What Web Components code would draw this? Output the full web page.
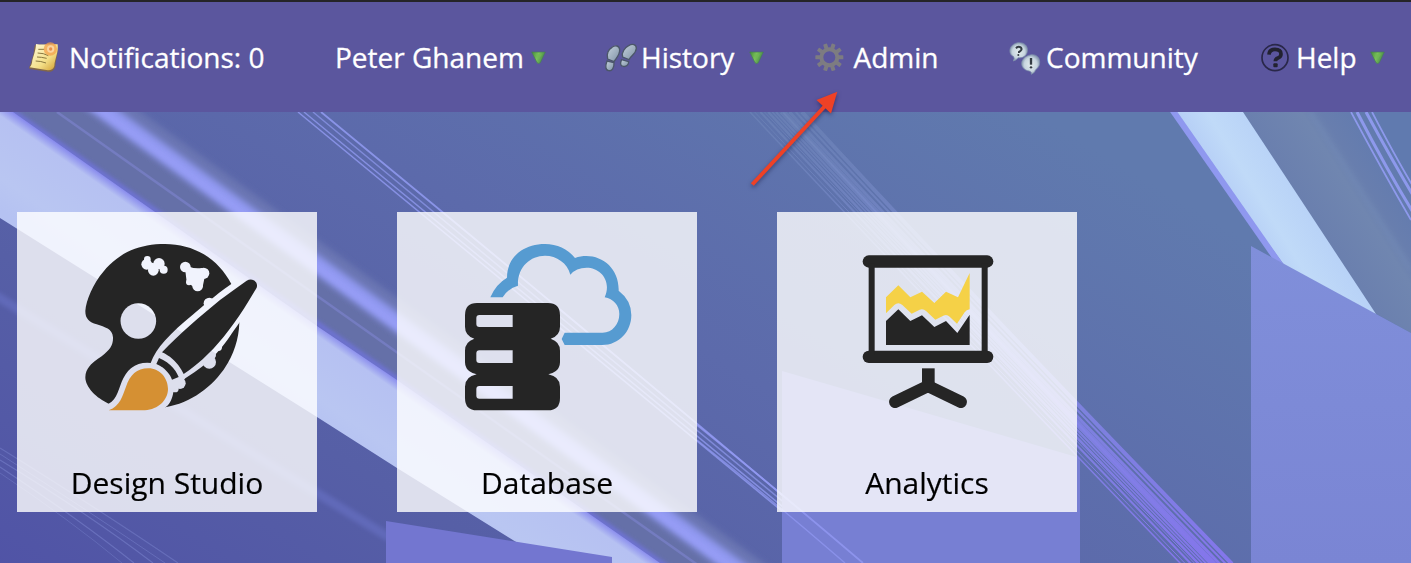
<!DOCTYPE html>
<html lang="en">
<head>
<meta charset="utf-8">
<title>Home</title>
<style>
html,body{margin:0;height:100%;overflow:hidden}
body{font-family:"Open Sans","Noto Sans",sans-serif}
</style>
</head>
<body>
<app-home></app-home>
<script>
const define = (name, html) => customElements.define(name, class extends HTMLElement {
  constructor() {
    super();
    const t = document.createElement('template');
    t.innerHTML = html;
    this.attachShadow({mode: 'open'}).appendChild(t.content.cloneNode(true));
  }
});

// Small and large icons, drawn on a grid of three units per pixel.
const gearTeeth = Array.from({length: 10}, (_, i) => `<rect x="-6" y="-42" width="12" height="18" rx="2" transform="rotate(${i * 36 + 18})"/>`).join('');
const ICONS = {
  note: [32, 34, `<defs><linearGradient id="n" x2="1" y2="1"><stop offset="0" stop-color="#fffbe0"/><stop offset=".6" stop-color="#f4df88"/><stop offset="1" stop-color="#cf9a2c"/></linearGradient></defs>
    <g transform="translate(-3 3)"><path d="M21 12 C45 8 65 13 86 10 C94 32 84 49 82 75 C81 86 73 94 60 92 L5 84 C2 75 7 74 9 65 C13 48 18 40 18 24Z" fill="#8c6b34" opacity=".8"/>
    <path d="M24 9 C45 13 65 8 89 10 C92 35 80 54 79 75 Q75 88 60 88 L5 79 C10 75 12 67 13 58 C17 42 23 30 24 9Z" fill="url(#n)"/>
    <path d="M31 25h18M29 36q18 0 32 8M27 48q12 0 29 4M23 60q15 0 31 6" fill="none" stroke="#8a7840" stroke-width="3"/>
    <circle cx="67" cy="24" r="20" fill="#f3a04b" opacity=".75"/><circle cx="68" cy="24" r="11" fill="#fbd4a0"/><circle cx="68" cy="24" r="5" fill="#e8904a"/></g>`],
  feet: [32, 30, `<defs><linearGradient id="f" x2="1" y2="1"><stop offset="0" stop-color="#c4d1dc"/><stop offset="1" stop-color="#7f92a6"/></linearGradient></defs>
    <g transform="translate(0 5)" fill="url(#f)" stroke="#4b5669" stroke-width="4"><path d="M21 11 C31 3 43 6 44 18 C45 34 34 42 27 54 L8 46 C3 31 11 17 21 11Z"/><path d="M6 52 L27 57 C28 72 21 83 11 81 C0 79 1 66 6 52Z"/>
    <path d="M71 6 C82 -1 94 2 94 14 C93 32 78 35 72 48 L53 40 C48 25 61 11 71 6Z"/><path d="M50 48 L71 54 C71 64 63 70 55 68 C45 67 45 58 50 48Z"/></g>`],
  gear: [30, 30, `<g transform="translate(43 46)" fill="#7d7c81">${gearTeeth}<circle r="24" fill="none" stroke="#7d7c81" stroke-width="12"/></g>`],
  chat: [32, 33, `<defs><radialGradient id="c"><stop offset="0" stop-color="#e3eced"/><stop offset=".7" stop-color="#c7d5df"/><stop offset="1" stop-color="#8d9fb4"/></radialGradient></defs>
    <g transform="translate(-1 3)"><g fill="url(#c)" stroke="#8295ad" stroke-width="2"><path d="M28 2 C48 1 58 12 56 28 C54 43 41 49 28 47 Q23 55 14 57 Q19 48 14 43 C-2 37 -1 7 28 2Z"/><path d="M68 38 C85 37 94 48 93 63 C93 72 86 80 80 84 Q80 91 68 97 Q70 89 62 87 C45 85 36 72 40 58 Q46 42 68 38Z"/></g>
    <path d="M22 19 q7-8 15-2 q5 7-6 13 v3" fill="none" stroke="#333b43" stroke-width="6"/><circle cx="29" cy="39" r="3" fill="#333b43"/><path d="M67 48v20" stroke="#333b43" stroke-width="7"/><circle cx="67" cy="76" r="3.6" fill="#333b43"/></g>`],
  help: [30, 30, `<g transform="translate(-1 4)"><circle cx="43" cy="43" r="39" fill="none" stroke="#292749" stroke-width="5"/><path d="M25 34 Q26 18 43 18 Q61 18 61 32 Q61 41 52 44 Q44 47 44 54" fill="none" stroke="#222230" stroke-width="11"/><rect x="38" y="60" width="13" height="12" rx="3" fill="#222230"/></g>`],
  caret: [15, 13, `<defs><linearGradient id="a" x2="1" y2=".3"><stop stop-color="#438b38"/><stop offset=".5" stop-color="#79c05a"/><stop offset="1" stop-color="#478a49"/></linearGradient></defs><path d="M2 3 H43 L28 35 Q23 40 18 35Z" fill="url(#a)" stroke="#477a58" stroke-width="2"/><path d="M13 10 H33 L23 26Z" fill="#71b654" opacity=".7"/>`],
  palette: [220, 210, `<defs><mask id="m" maskUnits="userSpaceOnUse" x="0" y="0" width="660" height="630"><rect width="660" height="630" fill="#fff"/>
    <circle cx="235" cy="303" r="53.5"/>
    <circle cx="262" cy="118" r="10"/><circle cx="260" cy="133" r="16"/><circle cx="275" cy="140" r="12"/><circle cx="297" cy="131" r="17"/><circle cx="280" cy="151" r="16"/><circle cx="311" cy="149" r="12"/>
    <circle cx="376" cy="141" r="16"/><circle cx="431" cy="160" r="17"/><circle cx="413" cy="198" r="16"/><circle cx="387" cy="187" r="9"/><path d="M376 152 L388 140 Q404 147 426 144 L434 172 L428 200 H400 L380 185Z"/>
    <circle cx="448" cy="250" r="17"/><circle cx="448" cy="426" r="20"/><circle cx="455" cy="405" r="13"/><circle cx="475" cy="382" r="11"/><circle cx="360" cy="490" r="17"/><circle cx="345" cy="506" r="11"/>
    <path d="M120 590 L146 551 C172 540 177 500 190 475 C205 444 230 428 262 428 L272 429 C288 385 330 340 400 283 C430 257 460 230 514 192 L620 130 L610 230 L538 308 C515 340 500 365 480 388 C450 425 415 450 376 475 L340 515 C338 535 329 553 316 562 L300 620Z"/></mask></defs>
    <path mask="url(#m)" fill="#252525" d="M146 551 C110 535 76 502 76 472 C76 440 103 425 125 409 C150 390 160 375 159 352 C157 326 135 322 110 313 C88 306 76 297 76 273 C78 240 100 190 130 155 C180 95 240 72 315 72 C400 72 475 115 514 192 C530 225 540 260 538 308 C535 430 440 540 316 562Z"/>
    <path fill="#252525" d="M306 397 C360 340 420 290 480 240 Q515 214 560 182 C577 172 596 186 590 203 L580 220 C545 280 500 345 460 386 C430 417 400 443 371 462 C355 430 335 410 306 397Z"/>
    <path fill="#252525" d="M297 414 C325 425 345 445 356 471 L336 479 C330 460 310 440 289 432Z"/>
    <path fill="#d59033" d="M146 571 C182 556 186 530 198 500 C210 465 230 445 265 445 C300 445 324 475 324 507 C324 540 295 568 255 571Z"/>`],
  database: [220, 210, `<path fill="#569bd1" d="M151 232 Q167 193 201 173 C201 112 249 72 315 72 Q370 72 405 114 C470 92 538 136 536 212 Q574 241 574 285 C574 334 538 375 486 375 H374 L365 357 L374 338 H488 C517 338 538 312 538 282 C538 257 520 236 494 232 C516 182 481 143 440 143 Q408 143 391 164 C382 129 350 107 315 107 C270 107 231 143 234 197 Q207 203 188 232Z"/>
    <path fill="#252525" fill-rule="evenodd" d="M111 249 H324 Q360 249 360 286 V320 Q360 347 332 356 Q360 365 360 392 V427 Q360 455 325 463 Q360 470 360 500 V534 Q360 571 324 571 H111 Q75 571 75 534 V500 Q75 470 110 463 Q75 455 75 427 V392 Q75 365 103 356 Q75 347 75 320 V286 Q75 249 111 249Z M118 285 Q109 285 109 294V312Q109 321 118 321H218V285Z M118 391 Q109 391 109 400V420Q109 429 118 429H218V391Z M118 498 Q109 498 109 507V527Q109 536 118 536H218V498Z"/>`],
  chart: [220, 210, `<g transform="translate(60 30)" fill="#252525"><rect x="68" y="76" width="392" height="37" rx="18.5"/><rect x="68" y="362" width="392" height="37" rx="18.5"/><path d="M86 100h18v275H86zM425 100h18v275h-18z"/>
    <path d="M138 273 L175 238 L211 273 L246 256 L283 291 L318 273 L352 309 L389 254 V345 H138Z"/>
    <path fill="#f5d147" d="M138 202 L175 166 L211 202 L246 185 L283 219 L318 185 L354 202 L389 129 V238 Q379 239 374 247 L351 281 L329 260 Q320 252 310 257 L286 269 L259 244 Q250 235 239 239 L215 251 L187 225 Q175 214 163 225 L138 250Z"/>
    <path d="M246 415h38v50h-38z"/><path d="M165 516 L264 468 L363 516" fill="none" stroke="#252525" stroke-width="36" stroke-linecap="round" stroke-linejoin="miter"/></g>`]
};
customElements.define('ui-icon', class extends HTMLElement {
  constructor() { super(); this.attachShadow({mode: 'open'}); }
  connectedCallback() {
    const [w, h, body] = ICONS[this.getAttribute('name')];
    this.shadowRoot.innerHTML = `<style>:host{display:block;flex:none;width:${w}px;height:${h}px}svg{display:block;overflow:visible}</style><svg width="${w}" height="${h}" viewBox="0 0 ${w * 3} ${h * 3}">${body}</svg>`;
  }
});

define('nav-item', `<style>
:host{display:flex;align-items:center;white-space:nowrap;color:#fff;font-size:28px;line-height:40px;height:40px}
.lead{width:var(--lead,0px);flex:none}
.label{width:var(--label);flex:none;-webkit-text-stroke:.3px #fff}
</style><div class="lead"><slot name="icon"></slot></div><span class="label"><slot></slot></span><slot name="caret"></slot>`);

define('top-bar', `<style>
:host{display:grid;box-sizing:border-box;height:112px;border-top:2px solid #252428;background:#5b569e;padding:0 0 0 29px;grid-template-columns:306px 270px 210px 194px 252px 1fr;align-items:center}
</style><slot></slot>`);

define('home-card', `<style>
:host{display:flex;flex-direction:column;box-sizing:border-box;width:300px;height:300px;padding-top:8px;background:rgba(255,255,255,.8);color:#000}
::slotted(ui-icon){margin-left:43px}
.label{font-size:30px;line-height:40px;margin-top:33px;text-align:center;-webkit-text-stroke:.2px #000}
</style><slot name="icon"></slot><div class="label"><slot></slot></div>`);

// Light rays: each one is a start point, a control point, an end point, a width and an opacity.
const rays = (list, color) => list.map(([x1, y1, cx, cy, x2, y2, w, o]) =>
  `<path d="M${x1} ${y1} Q${cx} ${cy} ${x2} ${y2}" fill="none" stroke="${color}" stroke-width="${w}" opacity="${o}"/>`).join('');
const fan = [0, .09, .2, .28, .35, .43, .5, .6, .66, .76, .88, 1].map((t, i) =>
  [750 + 52 * t, 112, 933 + 28 * t, 307 - 22 * t, 1181 + 51 * t, 564, [1.5, 1, 2, 1, 2.5, 1.5, 2, 4, 4, 3, 2, 4][i], 1]);

define('light-backdrop', `<style>:host{display:block;grid-area:1/1}svg{display:block}</style>
<svg width="1411" height="451" viewBox="0 112 1411 451" preserveAspectRatio="none">
<defs>
<linearGradient id="bg" gradientUnits="userSpaceOnUse" x1="300" y1="760" x2="780" y2="-40"><stop offset="0" stop-color="#5053a6"/><stop offset=".3" stop-color="#565fa6"/><stop offset=".6" stop-color="#5c6aab"/><stop offset="1" stop-color="#607aae"/></linearGradient>
<linearGradient id="white" gradientUnits="userSpaceOnUse" x1="106" y1="283" x2="156" y2="211"><stop offset="0" stop-color="#b5c2f2"/><stop offset=".3" stop-color="#b9c6f2"/><stop offset=".88" stop-color="#b6c1f2"/><stop offset="1" stop-color="#8587ed"/></linearGradient>
<linearGradient id="r" gradientUnits="userSpaceOnUse" x1="1224" y1="190" x2="1288" y2="151"><stop offset="0" stop-color="#b6cff6"/><stop offset=".35" stop-color="#c0daf8"/><stop offset=".86" stop-color="#b8d2f7"/><stop offset="1" stop-color="#8388e7"/></linearGradient>
<linearGradient id="rg" gradientUnits="userSpaceOnUse" x1="1298" y1="198" x2="1390" y2="140"><stop offset="0" stop-color="#6a7fae"/><stop offset=".45" stop-color="#7086b0"/><stop offset=".6" stop-color="#687eae"/><stop offset="1" stop-color="#607aaf"/></linearGradient>
<linearGradient id="ray" gradientUnits="userSpaceOnUse" x1="0" y1="112" x2="0" y2="563"><stop offset="0" stop-color="#7a91c0" stop-opacity=".35"/><stop offset=".5" stop-color="#818be2" stop-opacity=".8"/><stop offset="1" stop-color="#8476eb"/></linearGradient>
<linearGradient id="box" x2="0" y2="1"><stop offset="0" stop-color="#808fda"/><stop offset="1" stop-color="#7a85d4"/></linearGradient>
<filter id="glow" x="-5%" y="-5%" width="110%" height="110%"><feGaussianBlur stdDeviation="3"/></filter>
<filter id="soft" x="-5%" y="-5%" width="110%" height="110%"><feGaussianBlur stdDeviation="2"/></filter>
<filter id="fine" x="-5%" y="-5%" width="110%" height="110%"><feGaussianBlur stdDeviation=".6"/></filter>
</defs>
<rect y="112" width="1411" height="451" fill="url(#bg)"/>
<path d="M-16 92 H105 L778 580 H684Z" fill="#6570a8" filter="url(#glow)"/>
<path d="M89 92 L778 591" stroke="#6a76b3" stroke-width="28" filter="url(#glow)"/>
<path d="M84 96 L764 588" stroke="#9199f1" stroke-width="17" filter="url(#glow)"/>
<path d="M81 96 L760 588" stroke="#999ff8" stroke-width="6" opacity=".7" filter="url(#soft)"/>
<path d="M57 112 L702 568" stroke="#7e84d0" stroke-width="2.5" opacity=".6" filter="url(#fine)"/>
<path d="M-4 100 L674 572" stroke="#7174d9" stroke-width="5" filter="url(#soft)"/>
<path d="M-10 98 L-10 212 L0 218 L317 417 L397 468 L550 563 H660 L397 380 L317 326 L13 112Z" fill="url(#white)" filter="url(#fine)"/>
<path d="M-10 292 L390 538" stroke="#7079d0" stroke-width="9" opacity=".45" filter="url(#soft)"/>
<g filter="url(#fine)">${rays([[0,467,80,520,134,563,1.2,.4],[0,473,70,520,122,563,1,.3],[0,460,90,515,153,563,1.2,.4],[0,454,90,512,165,563,1,.35],[0,448,100,510,178,563,1.2,.35]], '#8994dc')}
${rays([[298,112,570,337,845,563,1.6,.85],[304,112,575,337,851,563,1.5,.8],[313,112,583,335,857,563,1.5,.7],[321,112,590,333,863,563,1.8,.9]], '#8e98ed')}</g>
<path d="M386 521 L612 557 V563 H386Z" fill="#7376d0"/>
<path d="M782 371 L1080 458 V563 H782Z" fill="#777fd3"/>
<g filter="url(#fine)">${rays([[697,440,770,498,845,563,1.5,.7],[697,425,775,488,863,563,1.7,.8]], '#9298f2')}${rays(fan, 'url(#ray)')}</g>
<path d="M1243 112 H1411 V333 L1373 312Z" fill="url(#rg)"/>
<path d="M1310 112 L1411 270" stroke="#7890bc" stroke-width="5" opacity=".3" filter="url(#soft)"/>
<path d="M1171 112 H1243 L1376 314 L1310 300Z" fill="url(#r)" filter="url(#fine)"/>
<path d="M1171 108 Q1230 192 1284 270" fill="none" stroke="#8f98ef" stroke-width="6" filter="url(#fine)"/>
<g filter="url(#fine)">${rays([[1351,112,1382,170,1411,220,1.7,.9],[1357,112,1387,170,1414,214,3,.9],[1366,112,1392,160,1414,197,3,.9],[1372,112,1396,158,1414,188,1.7,.9]], '#929cf3')}</g>
<path d="M1251 246 L1411 333 V563 H1251Z" fill="url(#box)"/>
</svg>`);

define('pointer-arrow', `<style>:host{position:absolute;left:740px;top:80px;width:110px;height:120px;pointer-events:none;filter:drop-shadow(0 2px 2px rgba(20,20,60,.5))}svg{display:block}</style>
<svg width="110" height="120" viewBox="740 80 110 120"><path d="M752.3 184.5 L825 106" stroke="#ee4126" stroke-width="4"/><path d="M837.3 91.7 L816.5 100 L831 113.4Z" fill="#ee4126"/></svg>`);

define('app-home', `<style>
:host{display:block;position:relative;width:1411px;height:563px;overflow:hidden}
main{display:grid;height:451px}
.cards{grid-area:1/1;display:flex;gap:80px;align-items:flex-start;padding:100px 0 0 17px;z-index:1}
</style>
<top-bar>
<nav-item style="--lead:40px"><ui-icon slot="icon" name="note"></ui-icon>Notifications: 0</nav-item>
<nav-item style="--label:196px"><ui-icon slot="caret" name="caret"></ui-icon>Peter Ghanem</nav-item>
<nav-item style="--lead:36px;--label:108px"><ui-icon slot="icon" name="feet"></ui-icon>History<ui-icon slot="caret" name="caret"></ui-icon></nav-item>
<nav-item style="--lead:38.5px"><ui-icon slot="icon" name="gear"></ui-icon>Admin</nav-item>
<nav-item style="--lead:37px"><ui-icon slot="icon" name="chat"></ui-icon>Community</nav-item>
<nav-item style="--lead:35px;--label:74px"><ui-icon slot="icon" name="help"></ui-icon>Help<ui-icon slot="caret" name="caret"></ui-icon></nav-item>
</top-bar>
<main><light-backdrop></light-backdrop>
<div class="cards">
<home-card><ui-icon slot="icon" name="palette"></ui-icon>Design Studio</home-card>
<home-card><ui-icon slot="icon" name="database"></ui-icon>Database</home-card>
<home-card><ui-icon slot="icon" name="chart"></ui-icon>Analytics</home-card>
</div></main>
<pointer-arrow></pointer-arrow>`);
</script>
</body>
</html>
